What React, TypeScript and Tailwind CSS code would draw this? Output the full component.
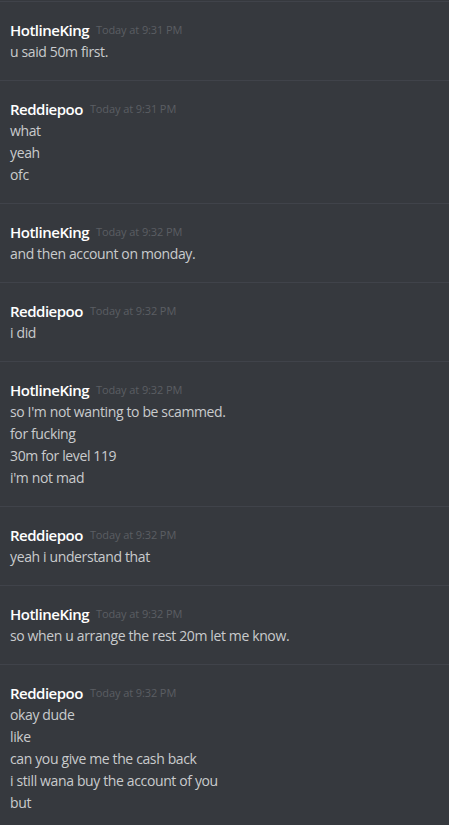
import React from "react";

type Msg = { name: string; time: string; lines: string[] };

const msgs: Msg[] = [
  { name: "HotlineKing", time: "Today at 9:31 PM", lines: ["u said 50m first."] },
  { name: "Reddiepoo", time: "Today at 9:31 PM", lines: ["what", "yeah", "ofc"] },
  { name: "HotlineKing", time: "Today at 9:32 PM", lines: ["and then account on monday."] },
  { name: "Reddiepoo", time: "Today at 9:32 PM", lines: ["i did"] },
  {
    name: "HotlineKing",
    time: "Today at 9:32 PM",
    lines: ["so I'm not wanting to be scammed.", "for fucking", "30m for level 119", "i'm not mad"],
  },
  { name: "Reddiepoo", time: "Today at 9:32 PM", lines: ["yeah i understand that"] },
  { name: "HotlineKing", time: "Today at 9:32 PM", lines: ["so when u arrange the rest 20m let me know."] },
  {
    name: "Reddiepoo",
    time: "Today at 9:32 PM",
    lines: ["okay dude", "like", "can you give me the cash back", "i still wana buy the account of you", "but"],
  },
];

export default function App() {
  return (
    <div
      className="w-[449px] h-[825px] overflow-hidden bg-[#36393e] pt-[1px]"
      style={{ fontFamily: '"Open Sans", "Noto Sans", sans-serif' }}
    >
      {msgs.map((m, i) => (
        <div key={i} className="border-t border-[#40434a] pl-[10px] pt-[18px] pb-[17px]">
          <div className="h-[21px] flex items-center gap-[7px]">
            <span className="text-[15px] font-semibold text-white tracking-[-0.5px]">{m.name}</span>
            <span className="text-[11px] text-[#5b5e63] tracking-[-0.1px]">{m.time}</span>
          </div>
          {m.lines.map((l, j) => (
            <div key={j} className="h-[22px] leading-[22px] text-[14px] text-[#c9cbcd] tracking-[-0.37px]">
              {l}
            </div>
          ))}
        </div>
      ))}
    </div>
  );
}
